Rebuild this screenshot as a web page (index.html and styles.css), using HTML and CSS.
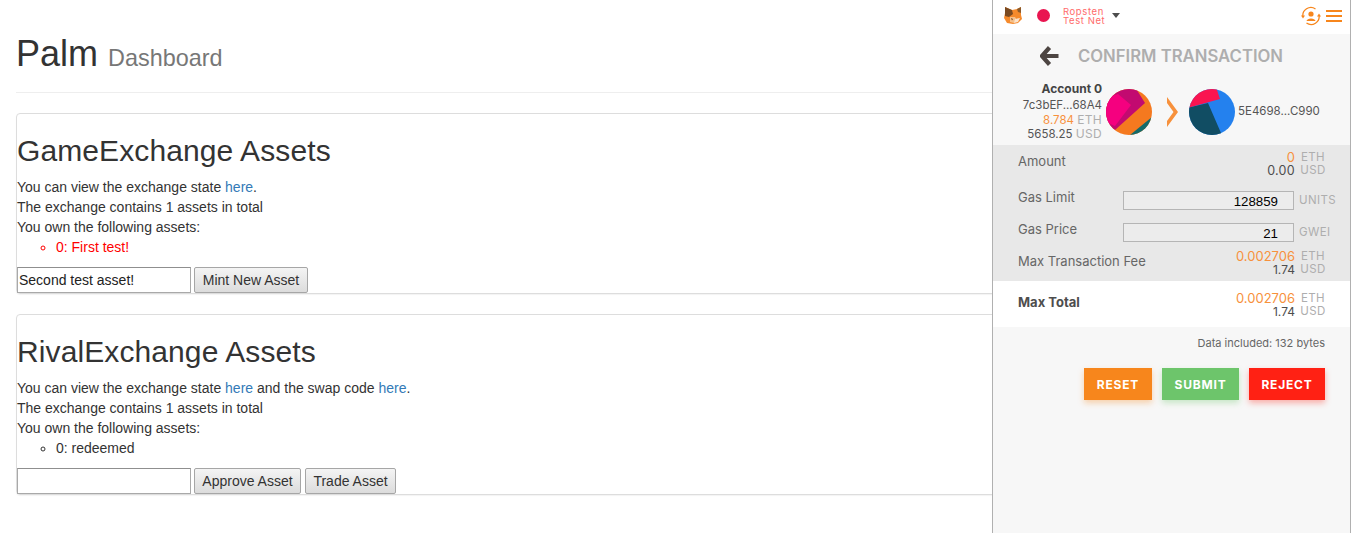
FILE: index.html
```html
<!DOCTYPE html>
<html lang="en">
<head>
<meta charset="utf-8">
<title>Palm Dashboard</title>
<link rel="stylesheet" href="styles.css">
</head>
<body>
<main class="page">
  <header class="page-header">
    <h1>Palm <small>Dashboard</small></h1>
  </header>
  <section class="panel">
    <h2>GameExchange Assets</h2>
    <div>You can view the exchange state <a href="#">here</a>.</div>
    <div>The exchange contains 1 assets in total</div>
    <div>You own the following assets:</div>
    <ul class="assets red"><li>0: First test!</li></ul>
    <div class="form-row">
      <input class="text-in" type="text" value="Second test asset!">
      <button class="btn b-mint">Mint New Asset</button>
    </div>
  </section>
  <section class="panel">
    <h2>RivalExchange Assets</h2>
    <div>You can view the exchange state <a href="#">here</a> and the swap code <a href="#">here</a>.</div>
    <div>The exchange contains 1 assets in total</div>
    <div>You own the following assets:</div>
    <ul class="assets"><li>0: redeemed</li></ul>
    <div class="form-row">
      <input class="text-in" type="text" value="">
      <button class="btn b-approve">Approve Asset</button>
      <button class="btn b-trade">Trade Asset</button>
    </div>
  </section>
</main>

<aside class="popup">
  <div class="mm-head">
    <svg class="fox" width="18" height="19" viewBox="0 0 18 19">
      <polygon points="1,1 8,4 13,3 17,1 17,9 18,13 14,17 9,18 3,17 0,12 1,7" fill="#f58a2c"/>
      <polygon points="1,1 8,4 9,8 5,11 1,10 1,6" fill="#7a4a22"/>
      <polygon points="17,1 13,3 14,6 17,7" fill="#8c5a2a"/>
      <polygon points="6,11 11,11 13,14 10,17 6,16" fill="#f6c08a"/>
      <polygon points="11,13 16,12 14,16 10,17" fill="#fbe3cc"/>
      <polygon points="7,12 9,13 8,14.5" fill="#6b4326"/>
    </svg>
    <span class="net-dot"></span>
    <span class="net-name">Ropsten<br>Test Net</span>
    <span class="caret"></span>
    <svg class="sync" width="20" height="20" viewBox="0 0 20 20" fill="none" stroke="#f7861c" stroke-width="1.3">
      <path d="M2 11 A8 8 0 0 1 14.5 3"/>
      <path d="M18 9 A8 8 0 0 1 5.5 17"/>
      <polygon points="0,9.5 4,9.5 2,12.5" fill="#f7861c" stroke="none"/>
      <polygon points="16,10.5 20,10.5 18,7.5" fill="#f7861c" stroke="none"/>
      <circle cx="10" cy="8" r="2.6" fill="#f7861c" stroke="none"/>
      <path d="M5.5 15 C6 11.5 14 11.5 14.5 15 Z" fill="#f7861c" stroke="none"/>
    </svg>
    <span class="burger"><i></i><i></i><i></i></span>
  </div>

  <div class="title-row">
    <svg class="back" width="19" height="20" viewBox="0 0 19 20">
      <path d="M9.5 1.5 L2 10 L9.5 18.5 M3 10 H18.5" fill="none" stroke="#4d4542" stroke-width="4.2"/>
    </svg>
    <span class="title">CONFIRM TRANSACTION</span>
  </div>

  <div class="hero">
    <div class="acct">
      <div class="acct-name">Account 0</div>
      <div>7c3bEF...68A4</div>
      <div><span class="orange">8.784</span> <span class="unit hu">ETH</span></div>
      <div>5658.25 <span class="unit hu">USD</span></div>
    </div>
    <svg class="identicon" width="46" height="46" viewBox="0 0 46 46">
      <defs><clipPath id="clipA"><circle cx="23" cy="23" r="23"/></clipPath></defs>
      <g clip-path="url(#clipA)">
        <rect width="46" height="46" fill="#f5791f"/>
        <polygon points="-2,-2 29,-2 39,14 9,41 -2,32" fill="#c20a70"/>
        <polygon points="12,5 25,16 9,37 -3,32 -3,10" fill="#f5007f"/>
        <polygon points="46,28 24,46 46,46" fill="#146b6a"/>
      </g>
    </svg>
    <svg class="chev" width="12" height="30" viewBox="0 0 12 30">
      <path d="M1 0 L12 15 L1 30 V24 L7.5 15 L1 6 Z" fill="#f7913c"/>
    </svg>
    <svg class="identicon" width="46" height="46" viewBox="0 0 46 46">
      <defs><clipPath id="clipB"><circle cx="23" cy="23" r="23"/></clipPath></defs>
      <g clip-path="url(#clipB)">
        <rect width="46" height="46" fill="#2481ee"/>
        <polygon points="-2,19 19,14 32,44 34,48 -2,48" fill="#114d63"/>
        <polygon points="-2,19 31,10 27,-2 -2,-2" fill="#fa1450"/>
      </g>
    </svg>
    <div class="dest">5E4698...C990</div>
  </div>

  <div class="rows">
    <div class="row">
      <span class="label l-amount">Amount</span>
      <div class="amt">
        <span class="orange num">0</span><span class="unit cu">ETH</span>
        <span class="num dark zero">0.00</span><span class="unit cu">USD</span>
      </div>
    </div>
    <div class="row r-limit">
      <span class="label tight">Gas Limit</span>
      <input class="gas" type="text" value="128859">
      <span class="unit gu">UNITS</span>
    </div>
    <div class="row r-price">
      <span class="label tight">Gas Price</span>
      <input class="gas" type="text" value="21">
      <span class="unit gu">GWEI</span>
    </div>
    <div class="row r-fee">
      <span class="label">Max Transaction Fee</span>
      <div class="amt">
        <span class="orange num">0.002706</span><span class="unit cu">ETH</span>
        <span class="num dark small-n">1.74</span><span class="unit cu">USD</span>
      </div>
    </div>
  </div>

  <div class="total">
    <div class="row">
      <span class="label strong">Max Total</span>
      <div class="amt">
        <span class="orange num">0.002706</span><span class="unit cu">ETH</span>
        <span class="num dark small-n">1.74</span><span class="unit cu">USD</span>
      </div>
    </div>
  </div>

  <div class="data">Data included: 132 bytes</div>

  <div class="actions">
    <button class="act a-reset">RESET</button>
    <button class="act a-submit">SUBMIT</button>
    <button class="act a-reject">REJECT</button>
  </div>
</aside>
</body>
</html>
```
FILE: styles.css
```css
* { box-sizing: border-box; }
html, body { height: 100%; }
body {
  margin: 0;
  overflow: hidden;
  background: #fff;
  color: #333;
  font: 14px/20px "Liberation Sans", Arial, sans-serif;
}
.page { padding: 0 16px; }
.page-header {
  padding: 34px 0 8px;
  margin-bottom: 20px;
  border-bottom: 1px solid #eee;
}
h1 {
  margin: 0 0 10px;
  font-size: 36px;
  font-weight: 500;
  line-height: 40px;
}
h1 small { font-size: 23.4px; font-weight: 400; line-height: 1; color: #777; }
.panel {
  height: 181px;
  margin-bottom: 20px;
  border: 1px solid #ddd;
  border-radius: 4px;
  box-shadow: 0 1px 1px rgba(0,0,0,.05);
}
h2 {
  margin: 20px 0 10px;
  font-size: 30px;
  font-weight: 500;
  line-height: 33px;
  letter-spacing: .1px;
}
a { color: #337ab7; text-decoration: none; }
.assets { margin: 0 0 10px; padding-left: 39px; list-style: circle; }
.red { color: #f00; }
.form-row { display: flex; height: 26px; gap: 3px; }
.text-in {
  width: 174px;
  height: 26px;
  padding: 1px;
  border: 1px solid #a9a9a9;
  border-top-color: #8f8f8f;
  background: #fff;
  color: #222;
  font: 14px "Liberation Sans", Arial, sans-serif;
}
.btn {
  height: 26px;
  padding: 0;
  border: 1px solid #a6a6a6;
  border-radius: 2px;
  background: linear-gradient(#f4f4f4, #dcdcdc);
  color: #333;
  font: 14px "Liberation Sans", Arial, sans-serif;
}
.b-mint { width: 114px; }
.b-approve { width: 107px; }
.b-trade { width: 91px; margin-left: 1px; }

/* extension popup, floating over the page */
.popup {
  position: absolute;
  top: 0;
  left: 992px;
  width: 359px;
  height: 533px;
  border-left: 1px solid #b0b0b0;
  border-right: 1px solid #b0b0b0;
  background: #f7f7f7;
  color: #4d4d4d;
  font: 12px/13px Inter, "Open Sans", sans-serif;
}
.mm-head {
  display: flex;
  align-items: center;
  height: 34px;
  padding: 0 8px 3px 11px;
  background: #fff;
}
.net-dot {
  width: 13px;
  height: 13px;
  margin-left: 15px;
  border-radius: 50%;
  background: #e91550;
}
.net-name {
  width: 49px;
  margin-left: 13px;
  color: #ff6b6b;
  font-size: 9.5px;
  line-height: 9px;
  letter-spacing: .6px;
}
.caret {
  width: 0;
  height: 0;
  border: 4px solid transparent;
  border-top: 5px solid #4d4d4d;
  border-bottom: 0;
}
.sync { margin-left: auto; }
.burger { display: flex; flex-direction: column; gap: 3px; width: 16px; margin-left: 5px; }
.burger i { display: block; height: 2px; background: #f7861c; }
.title-row {
  display: flex;
  align-items: center;
  height: 44px;
  padding: 0 0 0 47px;
}
.title {
  margin-left: 19px;
  color: #aeaeae;
  font-size: 16.7px;
  font-weight: 600;
}
.hero {
  display: flex;
  align-items: center;
  height: 67px;
}
.acct {
  width: 109px;
  text-align: right;
  font-size: 11.5px;
  line-height: 13.5px;
  color: #555;
}
.acct-name { margin-bottom: 4px; font-weight: 700; font-size: 12px; color: #444; }
.identicon { flex: none; margin-left: 4px; }
.chev { flex: none; margin: 0 11px 0 14px; }
.identicon + .chev + .identicon { margin-left: 0; }
.dest { margin-left: 3px; font-size: 11.5px; color: #555; }
.orange { color: #f7913c; }
.unit { color: #aeaeae; font-size: 11.5px; letter-spacing: .4px; }
.hu { font-size: 12px; letter-spacing: .3px; }
.rows { padding: 6px 0 5px 25px; background: #e8e8e8; }
.row { display: flex; align-items: flex-start; }
.label { flex: 1; padding-top: 5px; font-size: 13px; color: #666; }
.l-amount { padding-top: 4px; }
.strong { padding-top: 4px; font-weight: 700; color: #4d4d4d; }
.label.tight {
  flex: none;
  width: 105px;
  padding-top: 0;
}
.amt {
  display: grid;
  grid-template-columns: auto 34px;
  column-gap: 1px;
  margin-right: 20px;
  text-align: right;
}
.num { font-size: 13px; }
.dark { color: #4d4d4d; }
.zero { font-size: 12.5px; letter-spacing: .3px; }
.small-n { font-size: 12px; }
.cu { text-align: center; }
.r-limit { margin-top: 14px; }
.r-price { margin-top: 13px; }
.r-fee { margin-top: 8px; }
.gas {
  width: 171px;
  height: 19px;
  padding: 2px 15px 0 0;
  border: 1px solid #b5b5b5;
  background: #ececec;
  color: #000;
  text-align: right;
  font: 13.3px "Liberation Sans", Arial, sans-serif;
}
.gu { margin-left: 5px; line-height: 19px; }
.total { padding: 11px 0 9px 25px; background: #fff; }
.data {
  margin-top: 10px;
  padding-right: 25px;
  text-align: right;
  font-size: 11px;
  color: #666;
}
.actions {
  display: flex;
  justify-content: flex-end;
  gap: 10px;
  margin-top: 18px;
  padding-right: 25px;
}
.act {
  height: 32px;
  padding: 0;
  border: 0;
  color: #fff;
  font: 700 12px Inter, "Open Sans", sans-serif;
  letter-spacing: .8px;
}
.a-reset { width: 68px; background: #f7861c; box-shadow: 0 3px 6px rgba(247,134,28,.35); }
.a-submit { width: 77px; background: #6dc56b; box-shadow: 0 3px 6px rgba(109,197,107,.35); }
.a-reject { width: 76px; background: #ff2114; box-shadow: 0 3px 6px rgba(255,33,20,.35); }
```
